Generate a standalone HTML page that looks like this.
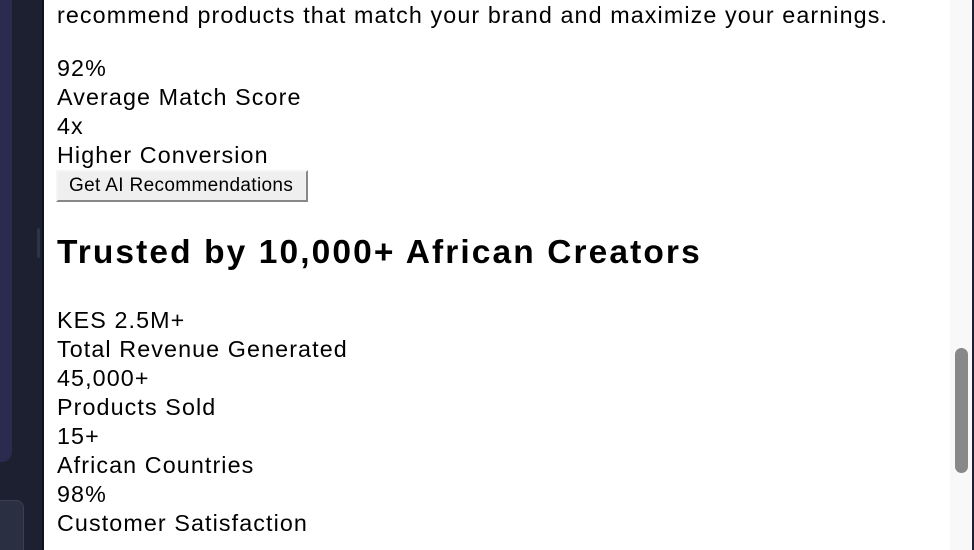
<!DOCTYPE html>
<html><head><meta charset="utf-8"><style>
html,body{margin:0;padding:0;width:974px;height:550px;overflow:hidden;background:#1b1f2e;font-family:"Liberation Sans",sans-serif;position:relative;}
.side{position:absolute;left:0;top:0;width:43px;height:550px;background:#1c2030;overflow:hidden;}
.p1{position:absolute;left:-20px;top:-10px;width:32px;height:472px;background:#2b2a4f;border-radius:0 0 10px 0;}
.p2{position:absolute;left:-20px;top:500px;width:42px;height:80px;background:#2a2f42;border-radius:0 8px 0 0;border:1px solid #3a3f52;}
.hnd{position:absolute;left:37px;top:228px;width:3px;height:30px;background:#2e3346;border-radius:2px;}
.line{position:absolute;left:42px;top:0;width:2px;height:550px;background:#10131d;}
.main{position:absolute;left:44px;top:0;width:906px;height:550px;background:#fff;color:#000;overflow:hidden;}
.track{position:absolute;left:950px;top:0;width:22px;height:550px;background:#f8f8f8;}
.thumb{position:absolute;left:955px;top:348px;width:13px;height:125px;background:#888;border-radius:7px;}
.redge{position:absolute;left:972px;top:0;width:2px;height:550px;background:#1c2030;}
.t{position:absolute;left:13px;font-size:23.3px;line-height:29px;white-space:nowrap;letter-spacing:1.1px;}
.btn{position:absolute;left:12px;top:170px;height:28px;background:#efefef;border:2px solid;border-top-color:#f5f5f5;border-left-color:#f5f5f5;border-right-color:#888;border-bottom-color:#888;font-size:19px;line-height:28px;padding-left:11px;box-sizing:content-box;width:237px;letter-spacing:0.35px;white-space:nowrap;}
h2{position:absolute;left:13px;top:233px;margin:0;font-size:33.5px;line-height:40px;font-weight:bold;white-space:nowrap;letter-spacing:2.1px;}
</style></head><body>
<div class="side"><div class="p1"></div><div class="p2"></div><div class="hnd"></div></div>
<div class="line"></div>
<div class="main">
<div class="t" style="top:1px">recommend products that match your brand and maximize your earnings.</div>
<div class="t" style="top:54px">92%</div>
<div class="t" style="top:83px">Average Match Score</div>
<div class="t" style="top:112px">4x</div>
<div class="t" style="top:141px">Higher Conversion</div>
<div class="btn">Get AI Recommendations</div>
<h2>Trusted by 10,000+ African Creators</h2>
<div class="t" style="top:306px">KES 2.5M+</div>
<div class="t" style="top:335px">Total Revenue Generated</div>
<div class="t" style="top:364px">45,000+</div>
<div class="t" style="top:393px">Products Sold</div>
<div class="t" style="top:422px">15+</div>
<div class="t" style="top:451px">African Countries</div>
<div class="t" style="top:480px">98%</div>
<div class="t" style="top:509px">Customer Satisfaction</div>
</div>
<div class="track"></div><div class="thumb"></div><div class="redge"></div>
</body></html>
